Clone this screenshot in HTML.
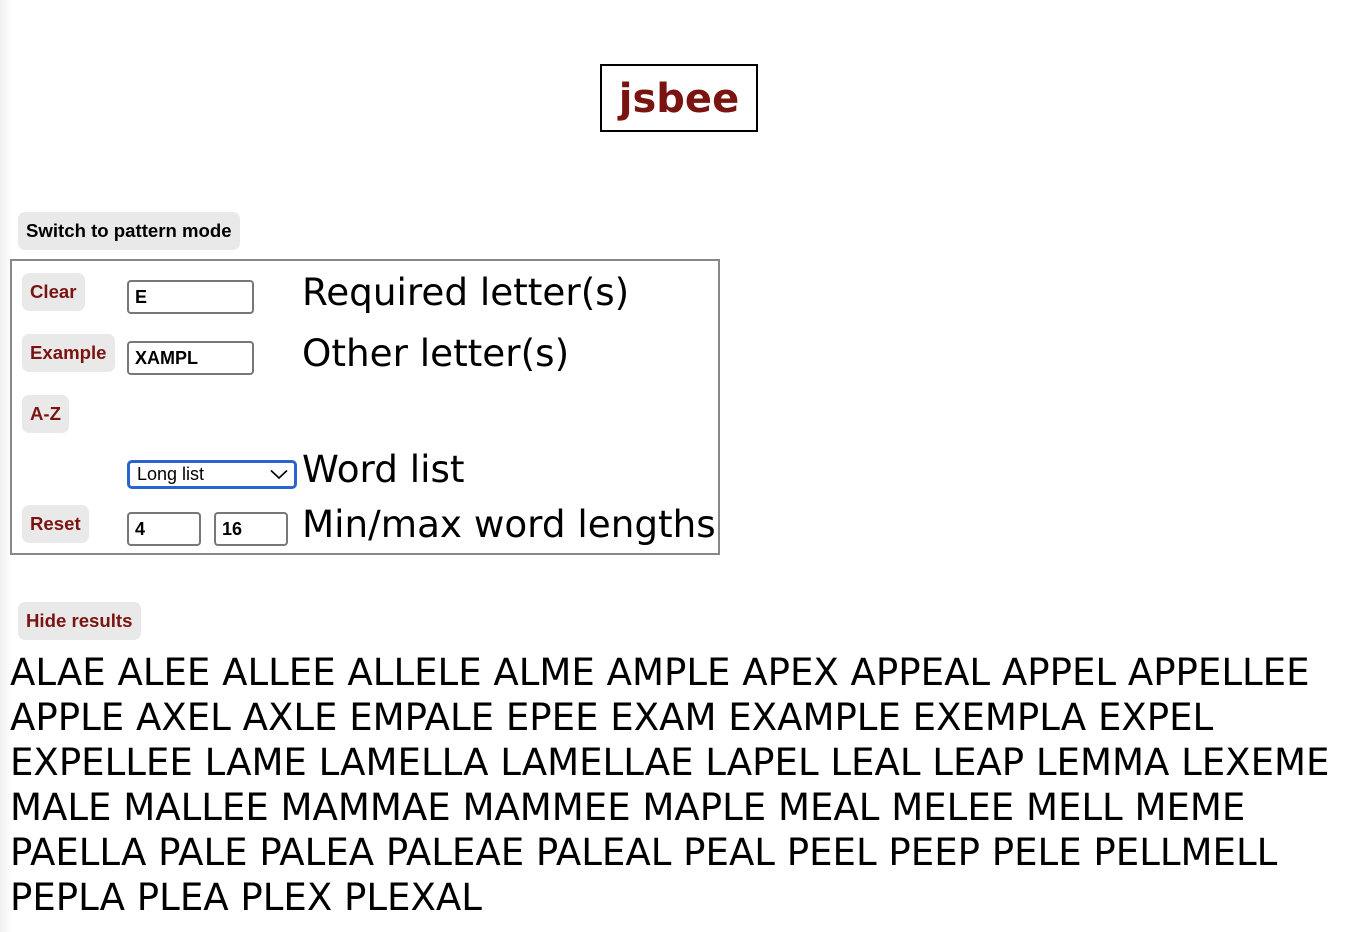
<!DOCTYPE html>
<html><head><meta charset="utf-8"><style>
body{margin:0;width:1362px;height:932px;background:#fff;position:relative;overflow:hidden;font-family:"DejaVu Sans","Liberation Sans",sans-serif;}
.grad{position:absolute;left:0;top:0;width:12px;height:932px;background:linear-gradient(to right,#f0f0f0,#fff);}
.title{position:absolute;left:600px;top:64px;width:154px;height:64px;border:2px solid #000;text-align:center;font-weight:bold;font-size:40px;line-height:66px;color:#7a1410;}
.btn{position:absolute;background:#e9e9e9;border-radius:7px;font-family:"Liberation Sans",Arial,sans-serif;font-weight:bold;font-size:18.6px;color:#7a1410;height:38px;line-height:38px;padding:0 8px;box-sizing:border-box;}
.inp{position:absolute;border:2px solid #777;border-radius:4px;box-sizing:border-box;height:34px;font-family:"Liberation Sans",Arial,sans-serif;font-weight:bold;font-size:18px;line-height:30px;padding-left:6px;background:#fff;}
.lbl{position:absolute;font-size:37.3px;line-height:40px;white-space:nowrap;}
.box{position:absolute;left:10px;top:259px;width:706px;height:292px;border:2px solid #888;}
.res{position:absolute;left:10px;top:650px;font-size:37.1px;line-height:45px;white-space:nowrap;}
</style></head><body>
<div class="grad"></div>
<div class="title">jsbee</div>
<div class="btn" style="left:18px;top:212px;width:222px;color:#000">Switch to pattern mode</div>
<div class="box"></div>
<div class="btn" style="left:22px;top:273px;width:63px">Clear</div>
<div class="btn" style="left:22px;top:334px;width:93px">Example</div>
<div class="btn" style="left:22px;top:395px;width:47px">A-Z</div>
<div class="btn" style="left:22px;top:505px;width:67px">Reset</div>
<div class="inp" style="left:127px;top:280px;width:127px">E</div>
<div class="inp" style="left:127px;top:341px;width:127px">XAMPL</div>
<div class="inp" style="left:127px;top:460px;width:170px;height:29px;border:3px solid #2a62d0;border-radius:5px;font-weight:normal;font-size:18px;line-height:23px;padding-left:7px">Long list<svg style="position:absolute;right:6px;top:6px" width="18" height="11" viewBox="0 0 18 11"><path d="M1 1.5 L9 9 L17 1.5" fill="none" stroke="#000" stroke-width="1.6"/></svg></div>
<div class="inp" style="left:127px;top:512px;width:74px">4</div>
<div class="inp" style="left:214px;top:512px;width:74px">16</div>
<div class="lbl" style="left:302px;top:272px">Required letter(s)</div>
<div class="lbl" style="left:302px;top:333px">Other letter(s)</div>
<div class="lbl" style="left:302px;top:449px">Word list</div>
<div class="lbl" style="left:302px;top:504px">Min/max word lengths</div>
<div class="btn" style="left:18px;top:602px;width:123px">Hide results</div>
<div class="res">ALAE ALEE ALLEE ALLELE ALME AMPLE APEX APPEAL APPEL APPELLEE<br>APPLE AXEL AXLE EMPALE EPEE EXAM EXAMPLE EXEMPLA EXPEL<br>EXPELLEE LAME LAMELLA LAMELLAE LAPEL LEAL LEAP LEMMA LEXEME<br>MALE MALLEE MAMMAE MAMMEE MAPLE MEAL MELEE MELL MEME<br>PAELLA PALE PALEA PALEAE PALEAL PEAL PEEL PEEP PELE PELLMELL<br>PEPLA PLEA PLEX PLEXAL</div>
</body></html>
